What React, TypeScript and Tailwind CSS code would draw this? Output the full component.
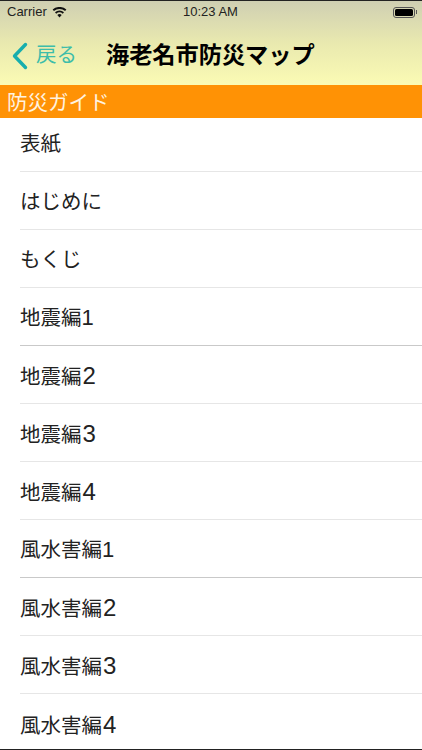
import React from "react";

const items = [
  { text: "表紙" },
  { text: "はじめに" },
  { text: "もくじ" },
  { text: "地震編", num: "1" },
  { text: "地震編", num: "2" },
  { text: "地震編", num: "3" },
  { text: "地震編", num: "4" },
  { text: "風水害編", num: "1" },
  { text: "風水害編", num: "2" },
  { text: "風水害編", num: "3" },
  { text: "風水害編", num: "4" },
];

const jp = "font-['Liberation_Sans','Noto_Sans_CJK_JP',sans-serif]";

const App: React.FC = () => {
  return (
    <div className="w-[422px] h-[750px] overflow-hidden bg-white flex flex-col border-t border-b border-[#222] font-['Liberation_Sans',sans-serif]">
      <div className="h-[84px] shrink-0 bg-gradient-to-b from-[#cfcfb2] via-[#e9e9af] to-[#fbfbb4] flex flex-col">
        <div className="h-[20px] mt-[1px] pl-[7px] pr-[5px] flex items-center justify-between text-[#222] relative">
          <div className="flex items-center gap-[5px] text-[13px]">
            <span>Carrier</span>
            <svg width="15" height="11" viewBox="0 0 16 12" fill="#111">
              <path d="M8 11.5 5.6 8.6a3.6 3.6 0 0 1 4.8 0L8 11.5Z" />
              <path d="M4.4 7.3 3.1 5.7a7.4 7.4 0 0 1 9.8 0l-1.3 1.6a5.4 5.4 0 0 0-7.2 0Z" />
              <path d="M1.9 4.4.5 2.8a11.2 11.2 0 0 1 15 0l-1.4 1.6a9.2 9.2 0 0 0-12.2 0Z" />
            </svg>
          </div>
          <span className="absolute left-[183px] text-[13px]">10:23 AM</span>
          <div className="flex items-center gap-[1px]">
            <div className="w-[22px] h-[11px] rounded-[3px] border border-[#555] p-[1px]">
              <div className="w-full h-full rounded-[1.5px] bg-black" />
            </div>
            <div className="w-[1px] h-[4px] bg-[#555]" />
          </div>
        </div>
        <div className="flex-1 flex items-center pt-[4px]">
          <svg className="ml-[11px] shrink-0" width="17" height="28" viewBox="0 0 17 28" fill="none">
            <path d="M14.5 2.5 3.5 14l11 11.5" stroke="#17aeae" strokeWidth="3.4" strokeLinecap="round" strokeLinejoin="round" />
          </svg>
          <span className={`ml-[8px] text-[20.5px] leading-none text-[#3dbdaa] ${jp}`}>戻る</span>
          <span className={`ml-[29px] text-[23.2px] leading-none font-bold text-black ${jp}`}>海老名市防災マップ</span>
        </div>
      </div>
      <div className={`h-[33px] shrink-0 bg-[#ff9205] pl-[7px] pt-[3px] flex items-center text-[20.5px] leading-none text-[#fff3e0] ${jp}`}>
        防災ガイド
      </div>
      <div className="flex-1 flex flex-col">
        {items.map((item, i) => (
          <div
            key={item.text + (item.num ?? "")}
            className={`${i === 0 ? "h-[54px] pb-[1px]" : "h-[58px] pt-[3px]"} shrink-0 ml-[20px] flex items-center text-[20.5px] leading-none text-[#222] ${jp} ${
              i === items.length - 1
                ? ""
                : i === 3 || i === 7
                  ? "border-b border-[#c9c9c9]"
                  : "border-b border-[#e6e6e6]"
            }`}
          >
            <span>
              {item.text}
              {item.num && (
                <span className={item.num === "1" ? "text-[22px]" : "text-[24px] ml-[1px]"}>{item.num}</span>
              )}
            </span>
          </div>
        ))}
      </div>
    </div>
  );
};

export default App;
